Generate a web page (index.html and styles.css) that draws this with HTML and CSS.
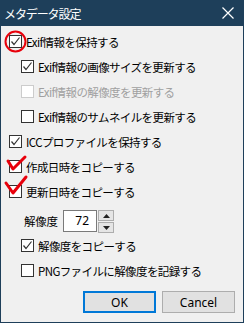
FILE: index.html
```html
<!DOCTYPE html>
<html lang="ja">
<head>
    <meta charset="UTF-8">
    <title>メタデータ設定</title>
    <link rel="stylesheet" href="styles.css">
</head>
<body>
    <div class="window">
        <div class="titlebar">
            <span class="title">メタデータ設定</span>
            <svg class="close" width="12" height="12" viewBox="0 0 12 12"><path d="M0.5 0.5 L11.5 11.5 M11.5 0.5 L0.5 11.5" stroke="#fff" stroke-width="1.2"/></svg>
        </div>

        <div class="content">
            <div class="row">
                <span class="box"><svg width="11" height="11" viewBox="0 0 11 11"><polyline points="1.5,5.5 4,8.5 9.5,1.5" fill="none" stroke="#333" stroke-width="1.2"/></svg></span>
                <span class="label">Exif情報を保持する</span>
            </div>
            <div class="row indent">
                <span class="box"><svg width="11" height="11" viewBox="0 0 11 11"><polyline points="1.5,5.5 4,8.5 9.5,1.5" fill="none" stroke="#333" stroke-width="1.2"/></svg></span>
                <span class="label">Exif情報の画像サイズを更新する</span>
            </div>
            <div class="row indent disabled">
                <span class="box"></span>
                <span class="label">Exif情報の解像度を更新する</span>
            </div>
            <div class="row indent">
                <span class="box"></span>
                <span class="label">Exif情報のサムネイルを更新する</span>
            </div>
            <div class="row">
                <span class="box"><svg width="11" height="11" viewBox="0 0 11 11"><polyline points="1.5,5.5 4,8.5 9.5,1.5" fill="none" stroke="#333" stroke-width="1.2"/></svg></span>
                <span class="label">ICCプロファイルを保持する</span>
            </div>
            <div class="row">
                <span class="box"></span>
                <span class="label">作成日時をコピーする</span>
            </div>
            <div class="row">
                <span class="box"></span>
                <span class="label">更新日時をコピーする</span>
            </div>

            <div class="res-row">
                <span class="res-label">解像度</span>
                <span class="num">72</span>
                <span class="spin">
                    <span class="spin-btn"><svg width="7" height="4" viewBox="0 0 7 4"><polygon points="0,4 7,4 3.5,0" fill="#222"/></svg></span>
                    <span class="spin-btn"><svg width="7" height="4" viewBox="0 0 7 4"><polygon points="0,0 7,0 3.5,4" fill="#222"/></svg></span>
                </span>
            </div>

            <div class="row indent">
                <span class="box"><svg width="11" height="11" viewBox="0 0 11 11"><polyline points="1.5,5.5 4,8.5 9.5,1.5" fill="none" stroke="#333" stroke-width="1.2"/></svg></span>
                <span class="label">解像度をコピーする</span>
            </div>
            <div class="row indent">
                <span class="box"></span>
                <span class="label">PNGファイルに解像度を記録する</span>
            </div>

            <div class="buttons">
                <button class="btn default">OK</button>
                <button class="btn">Cancel</button>
            </div>
        </div>

        <!-- red hand-drawn annotations -->
        <svg class="marks" width="244" height="323" viewBox="0 0 244 323">
            <ellipse cx="15.5" cy="41.5" rx="10" ry="10" fill="none" stroke="#e8000b" stroke-width="2"/>
            <polyline points="8,161 13,169 25,157" fill="none" stroke="#e8000b" stroke-width="3" stroke-linejoin="round" stroke-linecap="round"/>
            <polyline points="6,183 13,193 26,177" fill="none" stroke="#e8000b" stroke-width="3" stroke-linejoin="round" stroke-linecap="round"/>
        </svg>
    </div>
</body>
</html>
```

FILE: styles.css
```css
body {
    margin: 0;
    font-family: "Noto Sans CJK JP", sans-serif;
}

.window {
    position: relative;
    width: 244px;
    height: 323px;
    box-sizing: border-box;
    background: #f0f0f0;
    border: 1px solid #1e3f5a;
    border-top: none;
}

.titlebar {
    height: 26px;
    margin: 0 -1px;
    background: #1e3f5a;
    display: flex;
    align-items: center;
    justify-content: space-between;
    padding: 0 10px 0 4px;
    color: #fff;
    font-size: 12px;
}

.title {
    letter-spacing: -1.1px;
}

.content {
    padding: 3px 0 0 8px;
}

.row {
    height: 25px;
    display: flex;
    align-items: center;
    font-size: 11.5px;
    color: #000;
    letter-spacing: -0.6px;
}

.row.indent {
    padding-left: 12px;
}

.box {
    width: 11px;
    height: 11px;
    border: 1px solid #333;
    background: #fff;
    margin-right: 4px;
    display: flex;
}

.disabled {
    color: #a0a0a0;
}

.disabled .box {
    border-color: #cccccc;
}

.res-row {
    height: 29px;
    display: flex;
    align-items: flex-start;
    padding-left: 15px;
    font-size: 11.5px;
}

.res-label {
    margin-top: 9px;
    width: 39px;
    letter-spacing: -0.3px;
}

.num {
    margin-top: 6px;
    height: 20px;
    width: 25px;
    border: 1px solid #7a7a7a;
    background: #fff;
    text-align: right;
    padding-right: 7px;
    line-height: 20px;
    font-family: "Noto Sans", sans-serif;
    font-size: 12px;
}

.spin {
    margin-top: 6px;
    margin-left: 1px;
    display: flex;
    flex-direction: column;
    gap: 1px;
}

.spin-btn {
    width: 14px;
    height: 9px;
    border: 1px solid #adadad;
    background: #e5e5e5;
    display: flex;
    align-items: center;
    justify-content: center;
}

.buttons {
    display: flex;
    justify-content: flex-end;
    gap: 6px;
    padding: 8px 8px 0 0;
}

.btn {
    width: 73px;
    height: 22px;
    border: 1px solid #adadad;
    background: #e1e1e1;
    font-family: "Noto Sans", sans-serif;
    font-size: 12px;
    color: #000;
    padding: 0;
}

.btn.default {
    border: 2px solid #0078d7;
}

.marks {
    position: absolute;
    left: -1px;
    top: 0;
    pointer-events: none;
}
```
